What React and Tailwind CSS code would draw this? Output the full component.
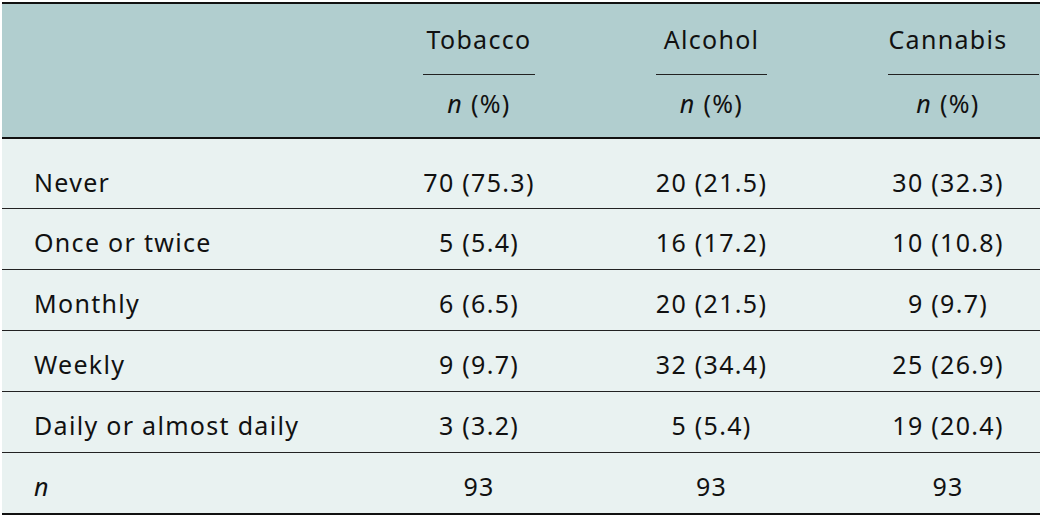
import React from "react";

const rows = [
  ["Never", "70 (75.3)", "20 (21.5)", "30 (32.3)"],
  ["Once or twice", "5 (5.4)", "16 (17.2)", "10 (10.8)"],
  ["Monthly", "6 (6.5)", "20 (21.5)", "9 (9.7)"],
  ["Weekly", "9 (9.7)", "32 (34.4)", "25 (26.9)"],
  ["Daily or almost daily", "3 (3.2)", "5 (5.4)", "19 (20.4)"],
];

function Row({ cells, first, last, italic }) {
  const h = first ? "h-[70px] pt-[17px]" : last ? "h-[60px] pt-[7px]" : "h-[61px] pt-[7px]";
  return (
    <div
      className={`grid grid-cols-[421px_233px_232px_151px] items-center whitespace-nowrap ${h} ${
        last ? "" : "border-b border-[#222]"
      }`}
    >
      <div className={`pl-[32px] ${italic ? "italic" : ""}`}>{cells[0]}</div>
      <div className="w-[112px] flex justify-center">
        <span className="shrink-0">{cells[1]}</span>
      </div>
      <div className="w-[111px] flex justify-center">
        <span className="shrink-0">{cells[2]}</span>
      </div>
      <div className="w-[120px] flex justify-center">
        <span className="shrink-0">{cells[3]}</span>
      </div>
    </div>
  );
}

export default function App() {
  return (
    <div
      className="w-[1042px] h-[519px] bg-white pt-[2px] pl-[2px] text-[25px] leading-none text-[#111] tracking-[1.3px]"
      style={{ fontFamily: '"Noto Sans", "Open Sans", sans-serif' }}
    >
      <div className="w-[1038px] border-t-2 border-b-2 border-[#111]">
        <div className="h-[135px] bg-[#b1cecf] border-b-2 border-[#111] grid grid-cols-[421px_233px_232px_151px] whitespace-nowrap">
          <div />
          {[
            ["Tobacco", "w-[112px]"],
            ["Alcohol", "w-[111px]"],
            ["Cannabis", "w-[151px]"],
          ].map(([t, w], i) => (
            <div key={t} className="flex flex-col">
              <div className={`${w} h-[71px] border-b border-[#222] flex items-end pb-[22px]`}>
                <div className={`${i === 2 ? "w-[120px]" : "w-full"} flex justify-center`}>
                  <span className="shrink-0">{t}</span>
                </div>
              </div>
              <div className={`${i === 2 ? "w-[120px]" : w} h-[62px] pb-[6px] flex items-center justify-center`}>
                <span className="shrink-0">
                  <i>n</i> (%)
                </span>
              </div>
            </div>
          ))}
        </div>
        <div className="bg-[#e9f2f1]">
          {rows.map((r, i) => (
            <Row key={i} cells={r} first={i === 0} />
          ))}
          <Row cells={["n", "93", "93", "93"]} last italic />
        </div>
      </div>
    </div>
  );
}
